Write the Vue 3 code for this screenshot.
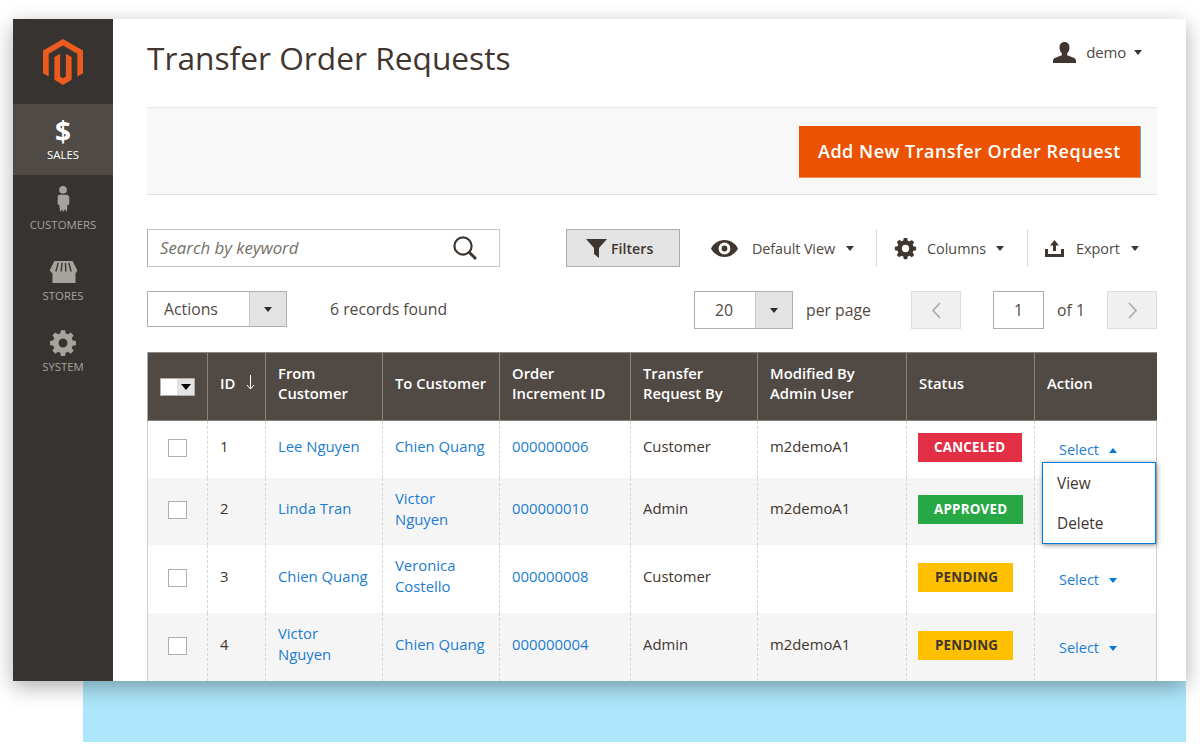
<script setup>
const nav = [
  { key: 'sales', label: 'SALES', active: true },
  { key: 'customers', label: 'CUSTOMERS' },
  { key: 'stores', label: 'STORES' },
  { key: 'system', label: 'SYSTEM' }
]
const gearPath = 'M10.2 1h3.6l.5 2.8 1.9.8 2.4-1.6 2.5 2.5-1.6 2.4.8 1.9 2.8.5v3.6l-2.8.5-.8 1.9 1.6 2.4-2.5 2.5-2.4-1.6-1.9.8-.5 2.8h-3.6l-.5-2.8-1.9-.8-2.4 1.6-2.5-2.5 1.6-2.4-.8-1.9L.9 13.8v-3.6l2.8-.5.8-1.9-1.6-2.4 2.5-2.5 2.4 1.6 1.9-.8zM12 8.2a3.8 3.8 0 1 0 0 7.6 3.8 3.8 0 0 0 0-7.6z'
const rows = [
  { id: 1, from: ['Lee Nguyen'], to: ['Chien Quang'], order: '000000006', by: 'Customer', admin: 'm2demoA1', status: 'CANCELED', cls: 'canceled', h: 57, open: true },
  { id: 2, from: ['Linda Tran'], to: ['Victor', 'Nguyen'], order: '000000010', by: 'Admin', admin: 'm2demoA1', status: 'APPROVED', cls: 'approved', h: 67 },
  { id: 3, from: ['Chien Quang'], to: ['Veronica', 'Costello'], order: '000000008', by: 'Customer', admin: '', status: 'PENDING', cls: 'pending', h: 68 },
  { id: 4, from: ['Victor', 'Nguyen'], to: ['Chien Quang'], order: '000000004', by: 'Admin', admin: 'm2demoA1', status: 'PENDING', cls: 'pending', h: 68 }
]
</script>

<template>
  <div class="page">
    <div class="window">
      <aside class="sidebar">
        <div class="logo">
          <svg width="40" height="46" viewBox="0 0 40 46">
            <path fill="#eb5a1e" d="M20 0 40 11.5V34.2L34.3 37.5V14.8L20 6.6 5.7 14.8V37.5L0 34.2V11.5Z" />
            <path fill="#eb5a1e" d="M11.4 18 17.1 14.8V37.5L20 39.2 22.9 37.5V14.8L28.6 18V40.8L20 46 11.4 40.8Z" />
          </svg>
        </div>
        <div v-for="item in nav" :key="item.key" class="nav-item" :class="{ active: item.active }">
          <span v-if="item.key === 'sales'" class="dollar">$</span>
          <svg v-else-if="item.key === 'customers'" class="nav-icon" width="14" height="27" viewBox="0 0 14 28">
            <circle cx="7" cy="4" r="4" fill="#a6a29c" />
            <path fill="#a6a29c" d="M2.5 9h9l2 2v8l-2 1-.5 7-2-3-2 3-1-3-2 3-.8-7-1.7-1v-8Z" />
          </svg>
          <svg v-else-if="item.key === 'stores'" class="nav-icon" width="29" height="23" viewBox="0 0 29 24">
            <path fill="#a6a29c" d="M5 0h19l5 10-2 3v10H3V13L0 10Z" />
            <path stroke="#373330" stroke-width="1.4" fill="none" d="M9 2 6.5 11M13 2l-1 9M16.5 2l.5 9M20 2l2.5 9" />
          </svg>
          <svg v-else class="nav-icon gear" width="28" height="28" viewBox="0 0 24 24">
            <path fill="#a6a29c" fill-rule="evenodd" :d="gearPath" />
          </svg>
          <span class="nav-label">{{ item.label }}</span>
        </div>
      </aside>

      <main class="main">
        <header class="header">
          <h1 class="title">Transfer Order Requests</h1>
          <div class="user">
            <svg width="23" height="21" viewBox="0 0 23 21">
              <path fill="#41362f" d="M11.5 0c3.2 0 5 2.2 5 5.6 0 2.6-1 4.6-2.4 5.8v1.8c2.8 1.2 6.5 2 8.3 3.6.5.6.6 2.4.6 4.2H0c0-1.8.1-3.6.6-4.2 1.8-1.6 5.5-2.4 8.3-3.6v-1.8C7.5 10.2 6.5 8.2 6.5 5.6c0-3.4 1.8-5.6 5-5.6Z" />
            </svg>
            <span class="user-name">demo</span>
            <i class="caret"></i>
          </div>
        </header>

        <div class="action-bar">
          <button class="add-btn">Add New Transfer Order Request</button>
        </div>

        <div class="toolbar">
          <div class="search">
            <span class="search-text">Search by keyword</span>
            <svg width="26" height="26" viewBox="0 0 26 26" fill="none" stroke="#41362f">
              <circle cx="11" cy="11" r="8.6" stroke-width="2.2" />
              <path d="M17.2 17.2 24 24" stroke-width="3" />
            </svg>
          </div>
          <button class="filters">
            <svg width="21" height="19" viewBox="0 0 21 19"><path fill="#41362f" d="M0 0h21l-8 9v10l-5-4V9Z" /></svg>
            Filters
          </button>
          <div class="tool view">
            <svg width="27" height="17" viewBox="0 0 27 17">
              <path fill="#41362f" fill-rule="evenodd" d="M13.5 0C20 0 25 4.2 27 8.5 25 12.8 20 17 13.5 17S2 12.8 0 8.5C2 4.2 7 0 13.5 0Zm0 2.6a5.9 5.9 0 1 0 0 11.8 5.9 5.9 0 0 0 0-11.8Zm0 3a2.9 2.9 0 1 1 0 5.8 2.9 2.9 0 0 1 0-5.8Z" />
            </svg>
            <span class="view-name">Default View</span>
            <i class="caret"></i>
          </div>
          <div class="tool columns">
            <svg width="23" height="23" viewBox="0 0 24 24"><path fill="#41362f" fill-rule="evenodd" :d="gearPath" /></svg>
            <span>Columns</span>
            <i class="caret"></i>
          </div>
          <div class="tool export">
            <svg width="19" height="17" viewBox="0 0 19 17">
              <path fill="#41362f" d="M9.5 0 14 5.5h-3V11H8V5.5H5ZM0 9h3v5h13V9h3v8H0Z" />
            </svg>
            <span>Export</span>
            <i class="caret"></i>
          </div>
        </div>

        <div class="pager-row">
          <div class="select actions">
            <span class="select-value">Actions</span>
            <span class="select-btn"><i class="caret dark"></i></span>
          </div>
          <span class="records">6 records found</span>
          <div class="select perpage">
            <span class="select-value center">20</span>
            <span class="select-btn"><i class="caret dark"></i></span>
          </div>
          <span class="per-label">per page</span>
          <span class="page-btn prev">
            <svg width="11" height="17" viewBox="0 0 11 17" fill="none" stroke="#a9a9a9" stroke-width="1.6"><path d="M9 1 2 8.5 9 16" /></svg>
          </span>
          <span class="page-input">1</span>
          <span class="of">of 1</span>
          <span class="page-btn next">
            <svg width="11" height="17" viewBox="0 0 11 17" fill="none" stroke="#a9a9a9" stroke-width="1.6"><path d="M2 1l7 7.5L2 16" /></svg>
          </span>
        </div>

        <table class="grid">
          <colgroup>
            <col style="width: 60px" /><col style="width: 58px" /><col style="width: 117px" />
            <col style="width: 117px" /><col style="width: 131px" /><col style="width: 127px" />
            <col style="width: 149px" /><col style="width: 128px" /><col style="width: 122px" />
          </colgroup>
          <thead>
            <tr>
              <th class="check-col"><span class="head-check"><b></b><span class="head-check-btn"><i class="caret black"></i></span></span></th>
              <th>
                <span class="id-head">ID
                  <svg width="9" height="15" viewBox="0 0 9 15" fill="none" stroke="#fff" stroke-width="1"><path d="M4.5 0v13.5M1 10l3.5 4L8 10" /></svg>
                </span>
              </th>
              <th>From<br />Customer</th>
              <th>To Customer</th>
              <th>Order<br />Increment ID</th>
              <th>Transfer<br />Request By</th>
              <th>Modified By<br />Admin User</th>
              <th>Status</th>
              <th>Action</th>
            </tr>
          </thead>
          <tbody>
            <tr v-for="row in rows" :key="row.id" :style="{ height: row.h + 'px' }">
              <td class="check-col"><span class="checkbox"></span></td>
              <td class="id">{{ row.id }}</td>
              <td class="link"><template v-for="(l, i) in row.from" :key="l"><br v-if="i" />{{ l }}</template></td>
              <td class="link"><template v-for="(l, i) in row.to" :key="l"><br v-if="i" />{{ l }}</template></td>
              <td class="link">{{ row.order }}</td>
              <td>{{ row.by }}</td>
              <td>{{ row.admin }}</td>
              <td class="status-cell"><span class="badge" :class="row.cls">{{ row.status }}</span></td>
              <td class="action-cell">
                <template v-if="row.id !== 2">
                  <span class="select-link">Select <i class="caret blue" :class="{ up: row.open }"></i></span>
                </template>
                <div v-if="row.open" class="menu">
                  <div>View</div>
                  <div>Delete</div>
                </div>
              </td>
            </tr>
          </tbody>
        </table>
      </main>
    </div>
    <div class="strip"></div>
  </div>
</template>

<style>
html, body { margin: 0; background: #fff; }
</style>

<style scoped>
.page {
  width: 1200px;
  height: 750px;
  overflow: hidden;
  padding-top: 19px;
  box-sizing: border-box;
  font-family: "Open Sans", sans-serif;
  color: #41362f;
  font-size: 15.8px;
}
.window {
  position: relative;
  z-index: 1;
  display: flex;
  width: 1173px;
  height: 662px;
  margin-left: 13px;
  background: #fff;
  box-shadow: 0 6px 20px rgba(0, 0, 0, .32);
  overflow: hidden;
}
.strip {
  width: 1103px;
  height: 61px;
  margin-left: 83px;
  background: #ade6fa;
}
.sidebar {
  flex: 0 0 100px;
  background: #373330;
  display: flex;
  flex-direction: column;
}
.logo {
  height: 85px;
  display: flex;
  justify-content: center;
  padding-top: 20px;
  box-sizing: border-box;
}
.nav-item {
  height: 71px;
  display: flex;
  flex-direction: column;
  align-items: center;
  justify-content: flex-end;
  padding-bottom: 14px;
  box-sizing: border-box;
  color: #a6a29c;
  font-size: 11.4px;
  line-height: 14px;
}
.nav-item.active {
  background: #4f4a45;
  color: #fff;
  padding-bottom: 13px;
}
.dollar {
  font-size: 28px;
  font-weight: 700;
  line-height: 26px;
  margin-bottom: 4px;
  color: #fff;
}
.nav-icon { margin-bottom: 5px; display: block; }
.nav-icon.gear { margin-bottom: 3px; }
.main {
  flex: 1;
  padding: 0 29px 0 34px;
  min-width: 0;
}
.header {
  display: flex;
  justify-content: space-between;
  height: 88px;
}
.title {
  margin: 16px 0 0;
  font-size: 31.7px;
  line-height: 46px;
  font-weight: 400;
  color: #41362f;
}
.user {
  display: flex;
  align-items: center;
  height: 24px;
  margin-top: 21px;
  margin-right: 15px;
  gap: 10px;
}
.user-name { color: #514943; font-size: 15px; letter-spacing: -.2px; margin-right: -2px; }
.caret {
  display: inline-block;
  width: 0;
  height: 0;
  border-left: 4.5px solid transparent;
  border-right: 4.5px solid transparent;
  border-top: 5px solid #41362f;
}
.caret.dark { border-top-color: #2f2a26; }
.caret.black { border-top-color: #000; border-left-width: 5px; border-right-width: 5px; border-top-width: 6px; }
.caret.blue { border-top-color: #007bdb; margin-left: 6px; vertical-align: 2px; }
.caret.up { border-top: 0; border-bottom: 5px solid #007bdb; }
.action-bar {
  height: 88px;
  box-sizing: border-box;
  background: #f8f8f8;
  border-top: 1px solid #e8e8e8;
  border-bottom: 1px solid #e0e0e0;
  display: flex;
  justify-content: flex-end;
  padding: 18px 16px 0 0;
}
.add-btn {
  width: 342px;
  height: 52px;
  border: 0;
  border-right: 1px solid #7f9fc0;
  border-bottom: 1px solid #f58a4e;
  background: #eb5202;
  color: #fff;
  font: 600 18px "Open Sans", sans-serif;
  letter-spacing: .52px;
  padding: 0 0 2px;
}
.toolbar {
  display: flex;
  align-items: center;
  margin-top: 34px;
  height: 38px;
}
.search {
  width: 353px;
  height: 38px;
  box-sizing: border-box;
  border: 1px solid #c6c6c6;
  border-left-color: #adadad;
  display: flex;
  align-items: center;
  justify-content: space-between;
  padding: 0 21px 0 12px;
}
.search-text { font-style: italic; color: #757067; font-size: 16.8px; position: relative; top: -1px; }
.filters {
  margin-left: 66px;
  width: 114px;
  height: 38px;
  box-sizing: border-box;
  background: #e3e3e3;
  border: 1px solid #adadad;
  color: #41362f;
  font: 600 14.2px "Open Sans", sans-serif;
  display: flex;
  align-items: center;
  gap: 4px;
  padding: 0 0 0 19px;
}
.tool {
  display: flex;
  align-items: center;
  height: 38px;
  box-sizing: border-box;
  font-size: 14.4px;
  color: #514943;
  white-space: nowrap;
}
.view { width: 197px; padding-left: 31px; border-right: 1px solid #d8d8d8; }
.view svg { margin-right: 14px; }
.view-name { margin-right: 11px; letter-spacing: -.1px; }
.columns { width: 151px; padding-left: 17px; border-right: 1px solid #d8d8d8; }
.columns svg { margin-right: 10px; }
.columns span { margin-right: 10px; }
.export { padding-left: 17px; }
.export svg { margin-right: 12px; }
.export span { margin-right: 11px; }
.pager-row {
  display: flex;
  align-items: flex-start;
  margin-top: 24px;
  height: 38px;
}
.select {
  display: flex;
  height: 36px;
  box-sizing: border-box;
  border: 1px solid #adadad;
}
.select-value {
  flex: 1;
  padding-left: 16px;
  line-height: 34px;
  color: #514943;
}
.select-value.center { padding-left: 0; padding-right: 2px; text-align: center; }
.select-btn {
  width: 36px;
  background: #e3e3e3;
  display: flex;
  align-items: center;
  justify-content: center;
  border-left: 1px solid #c8c8c8;
}
.actions { width: 140px; }
.perpage { width: 99px; height: 38px; }
.perpage .select-value { line-height: 36px; }
.records { margin-left: 43px; margin-right: 247px; width: 117px; white-space: nowrap; color: #514943; line-height: 36px; }
.per-label { margin-left: 13px; width: 105px; color: #514943; line-height: 38px; white-space: nowrap; }
.page-btn {
  width: 50px;
  height: 38px;
  box-sizing: border-box;
  background: #f0f0f0;
  border: 1px solid #dcdcdc;
  display: flex;
  align-items: center;
  justify-content: center;
}
.page-input {
  width: 51px;
  height: 38px;
  box-sizing: border-box;
  border: 1px solid #adadad;
  text-align: center;
  line-height: 36px;
  margin-left: 32px;
  color: #514943;
}
.of { margin-left: 13px; width: 50px; color: #514943; line-height: 38px; white-space: nowrap; }
.grid {
  margin-top: 23px;
  width: 1009px;
  table-layout: fixed;
  border-collapse: collapse;
  border-top: 1px solid #8a8a8a;
}
.grid th {
  height: 68px;
  box-sizing: border-box;
  padding: 0 12px 8px;
  background: #514943;
  color: #fff;
  font-size: 14.8px;
  font-weight: 600;
  line-height: 20px;
  text-align: left;
  border-left: 1px solid #8a8178;
  border-bottom: 1px solid #8a8178;
  white-space: nowrap;
}
.grid th.check-col { padding: 0 0 3px; text-align: center; }
.grid th:first-child { border-left-color: #adadad; }
.head-check {
  display: inline-flex;
  width: 35px;
  height: 18px;
  vertical-align: middle;
  background: #fff;
  border: 1px solid #adadad;
  box-sizing: border-box;
}
.head-check b { flex: 1; }
.head-check-btn {
  width: 17px;
  background: #e3e3e3;
  display: flex;
  align-items: center;
  justify-content: center;
}
.id-head { display: inline-flex; align-items: center; gap: 11px; }
.grid td {
  box-sizing: border-box;
  padding: 0 12px 5px;
  line-height: 21px;
  border-left: 1px dashed #d6d6d6;
  color: #41362f;
  font-size: 14.85px;
  white-space: nowrap;
}
.grid td:last-child { border-right: 1px solid #d0d0d0; }
.grid td:first-child { border-left: 1px solid #d0d0d0; }
.grid tbody tr:nth-child(even) td { background: #f5f5f5; }
.grid td.check-col { padding: 0 0 5px; text-align: center; }
.checkbox {
  display: inline-block;
  width: 19px;
  height: 18px;
  vertical-align: middle;
  background: #fff;
  border: 1px solid #adadad;
  box-sizing: border-box;
}
.grid td.link { color: #1b7dd1; }
.grid td.status-cell { padding-left: 11px; padding-right: 0; }
.badge {
  display: block;
  width: fit-content;
  box-sizing: border-box;
  height: 29px;
  line-height: 28px;
  padding: 0 16px;
  font-size: 13.4px;
  font-weight: 700;
  letter-spacing: .2px;
  position: relative;
  top: 1px;
}
.canceled { background: #e22f45; color: #fff; width: 104px; }
.approved { background: #28a845; color: #fff; width: 105px; }
.pending { background: #ffc000; color: #41362f; width: 95px; padding: 0 17px; }
.grid td.action-cell { position: relative; padding-left: 24px; font-size: 14.5px; }
.select-link { color: #1b7dd1; position: relative; top: 3px; }
.menu {
  position: absolute;
  z-index: 5;
  right: 0;
  top: 41px;
  width: 114px;
  height: 82px;
  box-sizing: border-box;
  background: #fff;
  border: 1px solid #007bdb;
  box-shadow: 1px 1px 5px rgba(0, 0, 0, .45);
  padding: 1px 14px 0;
  color: #41362f;
  font-size: 15.4px;
  line-height: 40px;
}
</style>
